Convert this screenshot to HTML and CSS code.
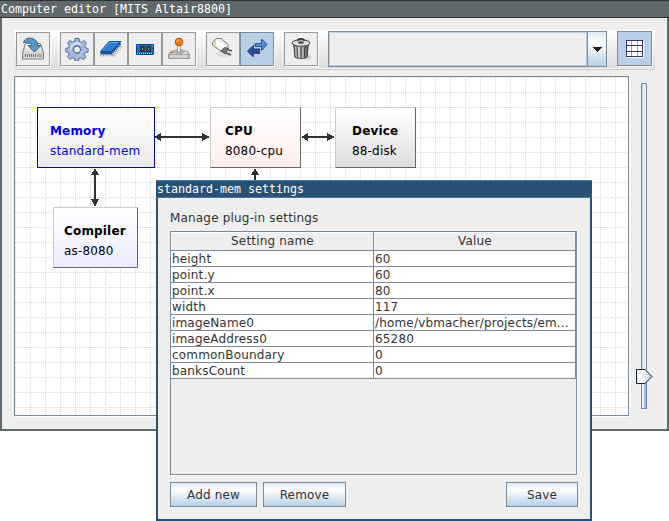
FILE: index.html
```html
<!DOCTYPE html>
<html lang="en">
<head>
<meta charset="utf-8">
<title>Computer editor</title>
<link rel="stylesheet" href="styles.css">
</head>
<body>
<div class="window">
  <div class="titlebar">Computer editor [MITS Altair8800]</div>
  <div class="content">
    <div class="toolbar">
      <button class="tool" aria-label="Save"><svg width="24" height="24" viewBox="0 0 24 24"><defs><linearGradient id="metal" x2="0" y2="1"><stop stop-color="#fff"/><stop offset="1" stop-color="#b5b7b4"/></linearGradient><linearGradient id="steel"><stop stop-color="#70736e"/><stop offset=".3" stop-color="#e8e9e6"/><stop offset=".6" stop-color="#989b96"/><stop offset="1" stop-color="#585b56"/></linearGradient></defs><path d="M4.500 6.500h15l3 9.500v6h-21v-6z" fill="url(#metal)" stroke="#777"/><path d="M2 16h20v5.500H2z" fill="#d2d3d0"/><path d="M4 18.500h11" stroke="#777" stroke-width="3" stroke-dasharray="1 1"/><path d="M16 18.500h5" stroke="#aaa" stroke-width="3"/><path d="M2.500 6C3 1.500 8 .5 11 1.500c4 1 5.500 3 5.500 7H20l-6.500 6.500L7 8.500h3.500c0-3-3-4.500-8-2.500z" fill="#5b98c6" stroke="#28618e"/></svg></button>
      <button class="tool gap" aria-label="Settings"><svg width="24" height="24" viewBox="0 0 24 24"><path d="M10 1.500h4l.5 3 2 .8 2.500-1.800 2.500 2.800-1.700 2.500.8 2 2.500.7v3.500l-3 .6-.8 2 1.700 2.500-2.700 2.500-2.300-1.700-2 .8-.5 2.300h-3.500l-.5-2.500-2.300-.8-2.300 1.700-2.500-2.600 1.700-2.300-.8-2-2.500-.6v-3.500l2.700-.6.8-2.300L2.400 6 5 3.500l2.500 1.600 2-.8z" fill="#a4b9dc" stroke="#5670a0"/><path d="M6 13a6 6 0 0 1 10-5" stroke="#d2ddf0" stroke-width="2" fill="none"/><circle cx="12" cy="12.500" r="3.500" fill="#eee" stroke="#5670a0" stroke-width="1.300"/></svg></button>
      <button class="tool" aria-label="Compiler"><svg width="24" height="24" viewBox="0 0 24 24"><path d="M14 19.500L22.500 9" stroke="#b0b0b0" stroke-width="3" stroke-dasharray="1 1"/><path d="M12.500 18L22 6.500" stroke="#676b70" stroke-width="2" stroke-dasharray="1.200 1"/><path d="M1.500 14.500L10 4.500h12L12.500 14.500z" fill="#2e7bd2" stroke="#1a5399"/><path d="M1.500 14.500v3h10.500l9.500-10.500V4.500L12 14.500z" fill="#14549e"/><path d="M4 13l6.500-7.500h8" fill="none" stroke="#65a7e7"/><path d="M2 17.500v2M4.500 17.500v2M7 17.500v2M9.500 17.500v2M12 17.500v2" stroke="#999"/></svg></button>
      <button class="tool" aria-label="Memory"><svg width="24" height="24" viewBox="0 0 24 24"><path d="M3.500 7.500h17v10h-17z" fill="#1672c3" stroke="#073f7d"/><path d="M7 9h5v6H7zM13 9h5v6h-5z" fill="#303840"/><path d="M9 11h1v2H9zM15 11h1v2h-1z" fill="#8293a0"/><path d="M4 16.500h16" stroke="#eed66d" stroke-dasharray="1 1"/><path d="M4 9h1M19 9h1" stroke="#9fd0f2"/></svg></button>
      <button class="tool" aria-label="Device"><svg width="24" height="24" viewBox="0 0 24 24"><path d="M1.500 20c0-4 2-6 4-6h13c3 0 4 3 4 7h-21z" fill="#e4e5e2" stroke="#868884"/><path d="M2 17.500h20v4H2z" fill="#cfd1cd" stroke="#888" stroke-width=".7"/><ellipse cx="12" cy="14.500" rx="5" ry="2" fill="#bbb" stroke="#888" stroke-width=".6"/><path d="M10.500 8h3v7h-3z" fill="#eee" stroke="#888" stroke-width=".8"/><circle cx="12" cy="5" r="3.800" fill="#ef7913" stroke="#b94c05"/><path d="M10 5c0-1.500 1-2 2-2" stroke="#ffc078" fill="none"/><path d="M4 15h3l-1 1.500H3z" fill="#e95a0c"/></svg></button>
      <button class="tool gap" aria-label="Connect"><svg width="24" height="24" viewBox="0 0 24 24"><ellipse cx="13" cy="17" rx="8" ry="3" fill="#ddd"/><path d="M16 12.500l5 1.500M14 15.500l6 2.500" stroke="#555" stroke-width="1.800"/><path d="M1.500 5.500L5 1.500h5l7 6v5L13.500 16 9 13.500 1.500 8z" fill="#eeeeea" stroke="#777"/><path d="M13.500 10.500l4 1-3.500 5-4-2.500z" fill="#777" stroke="#555"/><path d="M5 4l9 5M5 7l6 4" stroke="#fff" stroke-width="1.800"/><path d="M4 4v4" stroke="#e6cf74" stroke-width="1.600"/></svg></button>
      <button class="tool pressed" aria-label="Bidirectional"><svg width="24" height="24" viewBox="0 0 24 24"><path d="M10 6.500h6.500V2L22 7.500l-5.500 6v-4H10z" fill="#5a8bd0" stroke="#2354a3"/><path d="M14.500 12H8.500V8.500L2.500 14l6 6v-3.500h6z" fill="#224f9e" stroke="#273577"/><path d="M3 14.500l5.500 5.500v-3.500h6V12" stroke="#7e2b62" fill="none" stroke-width=".8"/></svg></button>
      <button class="tool gap" aria-label="Delete"><svg width="24" height="24" viewBox="0 0 24 24"><ellipse cx="14" cy="20" rx="8.500" ry="2.300" fill="#c8c8c8"/><path d="M4.500 7h15L18 20c-2 2-10 2-12 0z" fill="url(#steel)" stroke="#444"/><path d="M8 9l.7 12M12 10v12M16 9l-.7 12" stroke="#464944" stroke-width="1.200"/><path d="M10 9.500v12M14 9.500v12" stroke="#c8cac5"/><ellipse cx="12" cy="6" rx="9" ry="3.300" fill="#d9dbd7" stroke="#444"/><path d="M8.500 4C9 1 15 1 15.500 4" fill="none" stroke="#333" stroke-width="1.500"/><ellipse cx="12" cy="5.500" rx="3" ry="1.300" fill="#444"/></svg></button>
      <div class="combo"><div class="combo-field"></div><div class="combo-arrow"><svg width="10" height="5" viewBox="0 0 10 5" shape-rendering="crispEdges"><path d="M0 0h10L5 5z" fill="#222"/></svg></div></div>
      <button class="tool pressed grid-toggle" aria-label="Grid"><svg width="18" height="18" viewBox="0 0 18 18" shape-rendering="crispEdges"><path d="M1 1h17v17H1z" fill="#fff"/><path d="M5.500 1v15M11.500 1v15" stroke="#99c"/><path d="M.5.500h16v16H.5zM0 5.500h17M0 11.500h17" fill="none" stroke="#336"/></svg></button>
    </div>
    <div class="workspace">
      <div class="canvas">
        <svg class="wires" width="613" height="338" viewBox="15 77 613 338" shape-rendering="crispEdges">
          <defs>
            <pattern id="grid" x="15" y="77" width="30" height="30" patternUnits="userSpaceOnUse"><path d="M0 .5h30M0 15.500h30M.5 0v30M15.500 0v30" stroke="#d8d8d8" stroke-dasharray="1 1"/></pattern>
          </defs>
          <path d="M15 77h613v338H15z" fill="url(#grid)"/>
          <path d="M158 137h50M304 137h28M95 172v32M255 172v10" stroke="#323232" stroke-width="2"/>
          <path d="M154 137l7-4v8zM210 137l-8-4v8zM301 137l7-4v8zM335 137l-8-4v8zM95 168l-4 7h8zM95 207l-4-8h8zM255 168l-4 7h8z" fill="#323232"/>
        </svg>
        <div class="node memory"><b>Memory</b><span>standard-mem</span></div>
        <div class="node cpu"><b>CPU</b><span>8080-cpu</span></div>
        <div class="node device"><b>Device</b><span>88-disk</span></div>
        <div class="node compiler"><b>Compiler</b><span>as-8080</span></div>
      </div>
      <svg class="slider" width="17" height="328" viewBox="0 0 17 328"><defs><linearGradient id="thumb"><stop stop-color="#dce8f5"/><stop offset=".3" stop-color="#fff"/><stop offset="1" stop-color="#adc9e8"/></linearGradient></defs><path d="M5.500.5h5v325h-5z" fill="#eee" stroke="#7a8a99"/><path d="M6.500 1v292" stroke="#b8cfe5"/><path d="M5.500 293v32.500h5V293" fill="#d9e6f4" stroke="#6382bf"/><path d="M7 293v32" stroke="#fff"/><path d="M9 293v32" stroke="#a3bde0" stroke-width="2"/><path d="M.5.500H9l7 7-7 7H.5z" transform="translate(0 286)" fill="url(#thumb)" stroke="#222"/></svg>
    </div>
  </div>
</div>
<div class="dialog">
  <div class="dialog-title">standard-mem settings</div>
  <div class="dialog-body">
    <div class="caption">Manage plug-in settings</div>
    <div class="table-pane">
      <div class="row head"><div>Setting name</div><div>Value</div></div>
      <div class="row"><div>height</div><div>60</div></div>
      <div class="row"><div>point.y</div><div>60</div></div>
      <div class="row"><div>point.x</div><div>80</div></div>
      <div class="row"><div>width</div><div>117</div></div>
      <div class="row"><div>imageName0</div><div>/home/vbmacher/projects/em...</div></div>
      <div class="row"><div>imageAddress0</div><div>65280</div></div>
      <div class="row"><div>commonBoundary</div><div>0</div></div>
      <div class="row"><div>banksCount</div><div>0</div></div>
    </div>
    <div class="actions"><button class="action add">Add new</button><button class="action remove">Remove</button><button class="action save">Save</button></div>
  </div>
</div>
</body>
</html>
```
FILE: styles.css
```css
* { box-sizing: border-box; }
body {
  margin: 0;
  width: 669px;
  height: 521px;
  position: relative;
  overflow: hidden;
  background: #fff;
  color: #333;
  font: 12px/16px "DejaVu Sans", sans-serif;
  letter-spacing: .17px;
}
button { font: inherit; letter-spacing: inherit; color: inherit; padding: 0; margin: 0; border-radius: 0; }
svg { display: block; }

.window {
  height: 431px;
  border: 2px solid #5f686b;
  border-top: 0;
  background: #eee;
}
.titlebar {
  height: 18px;
  margin: 0 -2px;
  padding-left: 1px;
  border-top: 1px solid #303236;
  border-bottom: 1px solid #303236;
  background: #5f686b;
  color: #fff;
  font: 11.63px/16px "DejaVu Sans Mono", monospace;
  letter-spacing: 0;
  white-space: pre;
}
.content { padding: 12px 12px 0; }

.toolbar {
  display: flex;
  align-items: flex-start;
  width: 641px;
  height: 40px;
  padding: 2px 0 0 2px;
  background: linear-gradient(#fff, #ddd) 0 0 / 100% 38px no-repeat;
  border-bottom: 1px solid #ccc;
}
.tool {
  width: 34px;
  height: 34px;
  flex: none;
  display: grid;
  place-items: center;
  background: #eee;
  border: 1px solid #999;
  box-shadow: 1px 1px #fff;
}
.tool.gap { margin-left: 10px; }
.tool.pressed { background: #b8cfe5; border-color: #7a8a99; }
.combo {
  display: flex;
  width: 279px;
  height: 36px;
  margin: -1px 0 0 10px;
  border: 1px solid #7a8a99;
}
.combo-field { flex: 1; border: 1px solid #b8cfe5; background: #eee; }
.combo-arrow {
  width: 19px;
  display: grid;
  place-items: center;
  border-left: 1px solid #7a8a99;
  background: linear-gradient(#dde8f3, #fff 30%, #b8cfe5);
}
.tool.grid-toggle { width: 35px; height: 35px; margin: -1px 0 0 10px; }
.grid-toggle svg { margin: 1px 0 0 1px; }

.workspace { display: flex; gap: 7px; padding-top: 6px; }
.canvas {
  position: relative;
  width: 615px;
  height: 340px;
  border: 1px solid #7a8a99;
  box-shadow: 1px 1px #fff;
  background: #fff;
}
.slider { margin-top: 7px; }

.node {
  position: absolute;
  top: 30px;
  height: 61px;
  display: flex;
  flex-direction: column;
  padding-top: 13px;
  line-height: 20px;
  border: 1px solid;
  border-color: #ccc #666 #666 #ccc;
  color: #000;
  white-space: nowrap;
}
.memory { left: 22px; width: 118px; padding-left: 12px; border-color: #00c; color: #00e; background: linear-gradient(#fff, #eaeaea); }
.cpu { left: 195px; width: 91px; padding-left: 14px; background: linear-gradient(#fff, #ffecec); }
.device { left: 320px; width: 81px; padding-left: 16px; background: linear-gradient(#fff, #dedede); }
.compiler { left: 38px; top: 130px; width: 85px; padding-left: 10px; background: linear-gradient(#fff, #ececff); }

.dialog {
  position: absolute;
  left: 156px;
  top: 180px;
  width: 436px;
  height: 341px;
  border: 2px solid #275275;
  border-top: 0;
  background: #eee;
}
.dialog-title {
  height: 18px;
  margin: 0 -2px;
  padding-left: 1px;
  border-top: 1px solid #4b7899;
  border-bottom: 1px solid #4b7899;
  background: #275275;
  color: #fff;
  font: 11.63px/16px "DejaVu Sans Mono", monospace;
  letter-spacing: 0;
}
.dialog-body { padding: 12px 12px 0; }
.caption { height: 21px; }
.table-pane {
  width: 407px;
  height: 244px;
  border: 1px solid #7a8a99;
  box-shadow: 1px 1px #fff;
}
.row {
  display: grid;
  grid-template: 100% / 203px 202px;
  height: 16px;
  line-height: 17px;
  background: #fff;
}
.row > div {
  padding-left: 1px;
  border-right: 1px solid #7a8a99;
  border-bottom: 1px solid #7a8a99;
  white-space: nowrap;
}
.row.head { height: 19px; line-height: 19px; text-align: center; }
.row.head > div { background: #eee; box-shadow: inset 1px 1px #fff; }
.actions { display: flex; padding-top: 7px; }
.action {
  height: 25px;
  border: 1px solid #7a8a99;
  background: linear-gradient(#dde8f3, #fff 30%, #b8cfe5);
}
.add { width: 87px; }
.remove { width: 83px; margin-left: 6px; }
.save { width: 72px; margin-left: 160px; }
```
